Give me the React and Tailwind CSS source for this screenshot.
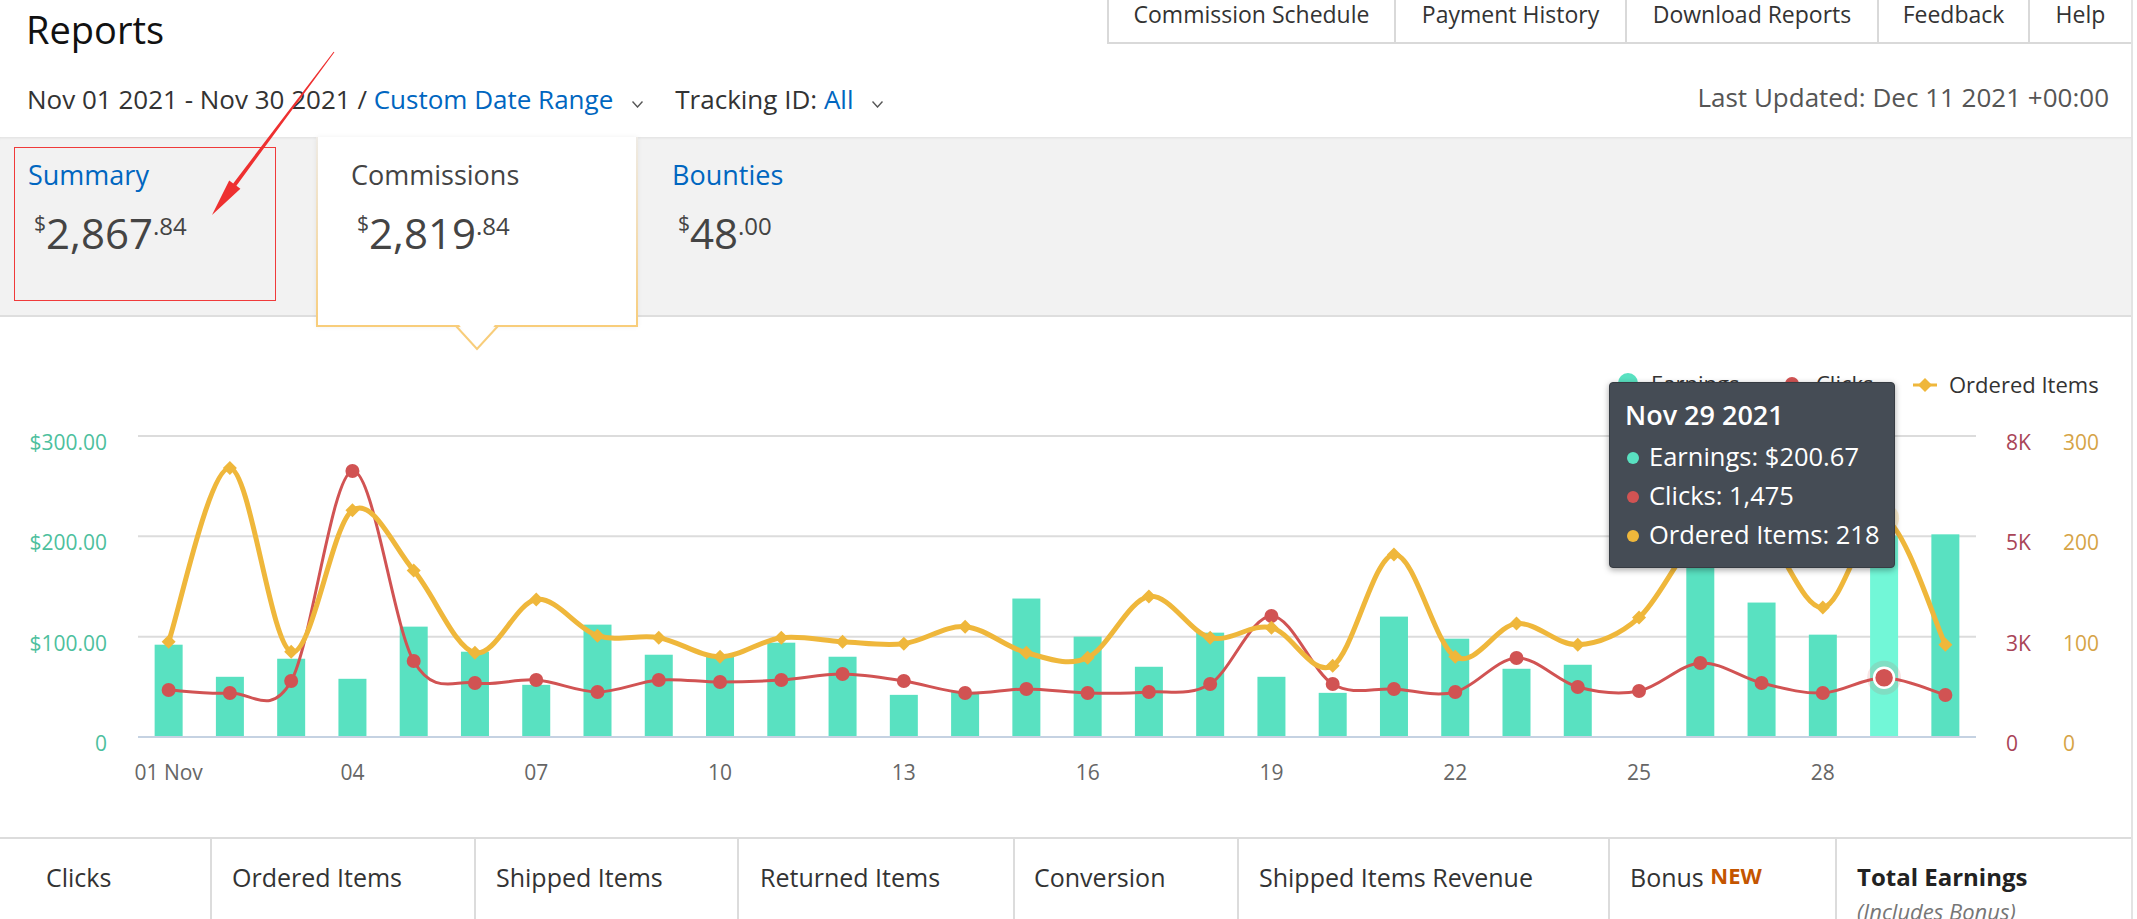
import React from "react";

const earnings = [92, 60, 78, 58, 110, 85, 52, 112, 82, 81, 94, 80, 42, 45, 138, 100, 70, 104, 60, 44, 120, 98, 68, 72, 0, 195, 134, 102, 200.67, 202];
const clicks = [1171, 1096, 1395, 6628, 1894, 1346, 1420, 1121, 1420, 1370, 1420, 1570, 1395, 1096, 1196, 1096, 1121, 1321, 3015, 1321, 1196, 1121, 1969, 1246, 1146, 1844, 1346, 1096, 1475, 1047];
const ordered = [95, 268, 85, 226, 166, 84, 137, 101, 99, 80, 99, 95, 93, 110, 84, 79, 140, 99, 109, 71, 182, 80, 113, 92, 119, 200, 205, 129, 218, 92];

const X0 = 138;
const X1 = 1976;
const BASE = 737;
const TOP = 436;
const STEP = (X1 - X0) / 30;
const HOVER = 28;

const cx = (i) => X0 + (i + 0.5) * STEP;
const yMoney = (v) => BASE - (v / 300) * (BASE - TOP);
const yClicks = (v) => BASE - (v / 7500) * (BASE - TOP);

const TEAL = "#59e1c1";
const RED = "#d15353";
const GOLD = "#efb73b";
const FONT = "'Open Sans', sans-serif";

// catmull-rom -> cubic bezier
const smooth = (pts) => {
  let d = `M${pts[0][0]},${pts[0][1]}`;
  for (let i = 0; i < pts.length - 1; i++) {
    const p0 = pts[i - 1] || pts[i];
    const p1 = pts[i];
    const p2 = pts[i + 1];
    const p3 = pts[i + 2] || p2;
    const c1x = p1[0] + (p2[0] - p0[0]) / 6;
    const c1y = p1[1] + (p2[1] - p0[1]) / 6;
    const c2x = p2[0] - (p3[0] - p1[0]) / 6;
    const c2y = p2[1] - (p3[1] - p1[1]) / 6;
    d += ` C${c1x},${c1y} ${c2x},${c2y} ${p2[0]},${p2[1]}`;
  }
  return d;
};

const diamond = (x, y, r) => `${x},${y - r} ${x + r},${y} ${x},${y + r} ${x - r},${y}`;

const Chevron = () => (
  <svg width="11" height="7" viewBox="0 0 11 7" className="ml-[19px] mt-[10px]" fill="none" stroke="#555" strokeWidth="1.4">
    <path d="M0.5 0.5 5.5 6 10.5 0.5" />
  </svg>
);

const Amount = ({ whole, cents }) => (
  <div className="mt-[20px] ml-[6px] flex items-start text-[#444]">
    <span className="mt-[1px] text-[21px] leading-[21px]">$</span>
    <span className="text-[42px] leading-[42px]">{whole}</span>
    <span className="mt-[2px] text-[24px] leading-[24px]">.{cents}</span>
  </div>
);

const Chart = () => {
  const clickPts = clicks.map((v, i) => [cx(i), yClicks(v)]);
  const orderPts = ordered.map((v, i) => [cx(i), yMoney(v)]);
  const dayLabels = [0, 3, 6, 9, 12, 15, 18, 21, 24, 27];

  return (
    <svg width="2131" height="520" viewBox="0 317 2131 520" className="block" fontFamily={FONT}>
      {[300, 200, 100].map((v) => (
        <line key={v} x1={X0} x2={X1} y1={yMoney(v)} y2={yMoney(v)} stroke="#dcdcdc" strokeWidth="2" />
      ))}

      {["$300.00", "$200.00", "$100.00", "0"].map((t, k) => (
        <text key={t} x="107" y={yMoney(300 - k * 100) + 14} textAnchor="end" fontSize="21" fill="#4dbf9e">
          {t}
        </text>
      ))}
      {["8K", "5K", "3K", "0"].map((t, k) => (
        <text key={t} x="2006" y={yMoney(300 - k * 100) + 14} fontSize="21" fill="#a94457">
          {t}
        </text>
      ))}
      {["300", "200", "100", "0"].map((t, k) => (
        <text key={t} x="2063" y={yMoney(300 - k * 100) + 14} fontSize="21" fill="#d6a446">
          {t}
        </text>
      ))}

      {earnings.map((v, i) =>
        v > 0 ? (
          <rect key={i} x={cx(i) - 14} y={yMoney(v)} width="28" height={BASE - yMoney(v)} fill={i === HOVER ? "#72f7d7" : TEAL} />
        ) : null
      )}

      <line x1={X0} x2={X1} y1={BASE} y2={BASE} stroke="#c5d2e2" strokeWidth="2" />

      {dayLabels.map((i) => (
        <text key={i} x={cx(i)} y="780" textAnchor="middle" fontSize="21" fill="#666">
          {i === 0 ? "01 Nov" : String(i + 1).padStart(2, "0")}
        </text>
      ))}

      <path d={smooth(clickPts)} fill="none" stroke={RED} strokeWidth="3" />
      <circle cx={cx(HOVER)} cy={clickPts[HOVER][1]} r="17" fill={RED} opacity="0.15" />
      {clickPts.map(([x, y], i) =>
        i === HOVER ? (
          <circle key={i} cx={x} cy={y} r="10" fill={RED} stroke="#fff" strokeWidth="2.5" />
        ) : (
          <circle key={i} cx={x} cy={y} r="7" fill={RED} />
        )
      )}

      <path d={smooth(orderPts)} fill="none" stroke={GOLD} strokeWidth="5" />
      <circle cx={cx(HOVER)} cy={orderPts[HOVER][1]} r="15" fill={GOLD} opacity="0.25" />
      {orderPts.map(([x, y], i) => (
        <polygon key={i} points={diamond(x, y, 7)} fill={GOLD} />
      ))}

      <circle cx="1628" cy="383" r="10" fill={TEAL} />
      <text x="1651" y="392" fontSize="22" fill="#333">Earnings</text>
      <circle cx="1792" cy="384" r="7" fill={RED} />
      <text x="1816" y="392" fontSize="22" fill="#333">Clicks</text>
      <line x1="1913" x2="1937" y1="385" y2="385" stroke={GOLD} strokeWidth="3" />
      <polygon points={diamond(1925, 385, 7)} fill={GOLD} />
      <text x="1949" y="393" fontSize="22" fill="#333">Ordered Items</text>
    </svg>
  );
};

const TooltipRow = ({ color, children }) => (
  <div className="flex h-[39px] items-center">
    <span className="ml-[2px] mr-[10px] mt-[3px] h-[12px] w-[12px] rounded-full" style={{ backgroundColor: color }} />
    <span className="text-[25.5px] leading-[39px]">{children}</span>
  </div>
);

const topTabs = [
  ["Commission Schedule", "w-[287px]"],
  ["Payment History", "w-[231px]"],
  ["Download Reports", "w-[252px]"],
  ["Feedback", "w-[151px]"],
  ["Help", "w-[101px]"],
];

const columns = [
  ["Clicks", "w-[210px] pl-[46px]"],
  ["Ordered Items", "w-[264px] border-l-2 pl-[20px]"],
  ["Shipped Items", "w-[263px] border-l-2 pl-[20px]"],
  ["Returned Items", "w-[276px] border-l-2 pl-[21px]"],
  ["Conversion", "w-[224px] border-l-2 pl-[19px]"],
  ["Shipped Items Revenue", "w-[371px] border-l-2 pl-[20px]"],
];

export default function App() {
  return (
    <div className="relative min-h-[919px] w-[2133px] overflow-hidden border-r-2 border-[#e3e3e3] bg-white font-['Open_Sans',sans-serif] text-[#333]">
      {/* header */}
      <div className="flex items-start justify-between">
        <h1 className="pl-[26px] pt-[4px] text-[38px] leading-[50px] text-[#111]">Reports</h1>
        <nav className="flex h-[44px] border-b-2 border-l-2 border-[#d9d9d9]">
          {topTabs.map(([t, w], i) => (
            <div
              key={t}
              className={`${w} flex justify-center text-[23px] leading-[28px] text-[#333] ${i < topTabs.length - 1 ? "border-r-2 border-[#d9d9d9]" : ""}`}
            >
              {t}
            </div>
          ))}
        </nav>
      </div>

      <div className="mt-[28px] flex items-center justify-between pl-[27px] pr-[22px]">
        <div className="flex items-center text-[26px] leading-[34px] text-[#333]">
          <span className="whitespace-pre">Nov 01 2021 - Nov 30 2021 / </span>
          <span className="text-[#0066c0]">Custom Date Range</span>
          <Chevron />
          <span className="ml-[32px] whitespace-pre">Tracking ID: </span>
          <span className="text-[#0066c0]">All</span>
          <Chevron />
        </div>
        <div className="-mt-[4px] text-[26px] leading-[34px] text-[#555]">Last Updated: Dec 11 2021 +00:00</div>
      </div>

      {/* summary band */}
      <div className="mt-[21px] flex h-[180px] border-b-2 border-[#dedede] bg-[#f2f2f2] shadow-[inset_0_3px_3px_-2px_rgba(0,0,0,0.08)]">
        <div className="w-[316px] pl-[28px] pt-[21px]">
          <div className="text-[27px] leading-[34px] text-[#0066c0]">Summary</div>
          <Amount whole="2,867" cents="84" />
        </div>
        <div className="relative z-10 h-[190px] w-[322px] bg-gradient-to-b from-[#eeebe6] to-[#f8cd7a] px-[2px] pb-[2px] shadow-[0_0_5px_rgba(0,0,0,0.06)]">
          <div className="h-full bg-white pl-[33px] pt-[21px]">
            <div className="text-[27px] leading-[34px] text-[#444]">Commissions</div>
            <Amount whole="2,819" cents="84" />
          </div>
          <svg width="46" height="29" viewBox="0 0 46 29" className="absolute left-[138px] top-[186px]">
            <polygon points="3.5,0 42.5,0 23,24" fill="#fff" />
            <polyline points="2,3 23,26 44,3" fill="none" stroke="#f8cd7a" strokeWidth="2" />
          </svg>
        </div>
        <div className="w-[319px] pl-[34px] pt-[21px]">
          <div className="text-[27px] leading-[34px] text-[#0066c0]">Bounties</div>
          <Amount whole="48" cents="00" />
        </div>
      </div>

      {/* chart */}
      <div className="relative h-[520px]">
        <Chart />
        <div className="absolute left-[1609px] top-[65px] h-[186px] w-[286px] rounded-[4px] border border-[#363b42] bg-[#454c55] pl-[15px] pt-[15px] text-white shadow-[0_2px_6px_rgba(0,0,0,0.35)]">
          <div className="text-[27px] font-semibold leading-[34px]">Nov 29 2021</div>
          <div className="mt-[5px]">
            <TooltipRow color={TEAL}>Earnings: $200.67</TooltipRow>
            <TooltipRow color={RED}>Clicks: 1,475</TooltipRow>
            <TooltipRow color={GOLD}>Ordered Items: 218</TooltipRow>
          </div>
        </div>
      </div>

      {/* totals table header */}
      <div className="flex h-[100px] border-t-2 border-[#dcdcdc]">
        {columns.map(([t, cls]) => (
          <div key={t} className={`${cls} border-[#dcdcdc] pt-[21px] text-[25px] leading-[34px] text-[#333]`}>
            {t}
          </div>
        ))}
        <div className="w-[227px] border-l-2 border-[#dcdcdc] pl-[20px] pt-[21px] text-[25px] leading-[34px] text-[#333]">
          Bonus{" "}
          <span className="relative -top-[3px] text-[22px] font-bold text-[#c45500]">NEW</span>
        </div>
        <div className="flex-1 border-l-2 border-[#dcdcdc] pl-[20px] pt-[21px]">
          <div className="text-[24px] font-bold leading-[34px] text-[#222]">Total Earnings</div>
          <div className="text-[22px] italic leading-[34px] text-[#767676]">(Includes Bonus)</div>
        </div>
      </div>

      {/* annotation overlay */}
      <div className="pointer-events-none absolute left-[14px] top-[147px] z-20 h-[154px] w-[262px] border border-[#f03a3a]" />
      <svg className="pointer-events-none absolute left-0 top-0 z-20" width="400" height="300">
        <polygon
          points="334.4,52.3 236.4,185.8 240.4,188.8 212,215 229.2,180.4 233.2,183.4 333.6,51.7"
          fill="#ee3030"
        />
      </svg>
    </div>
  );
}
